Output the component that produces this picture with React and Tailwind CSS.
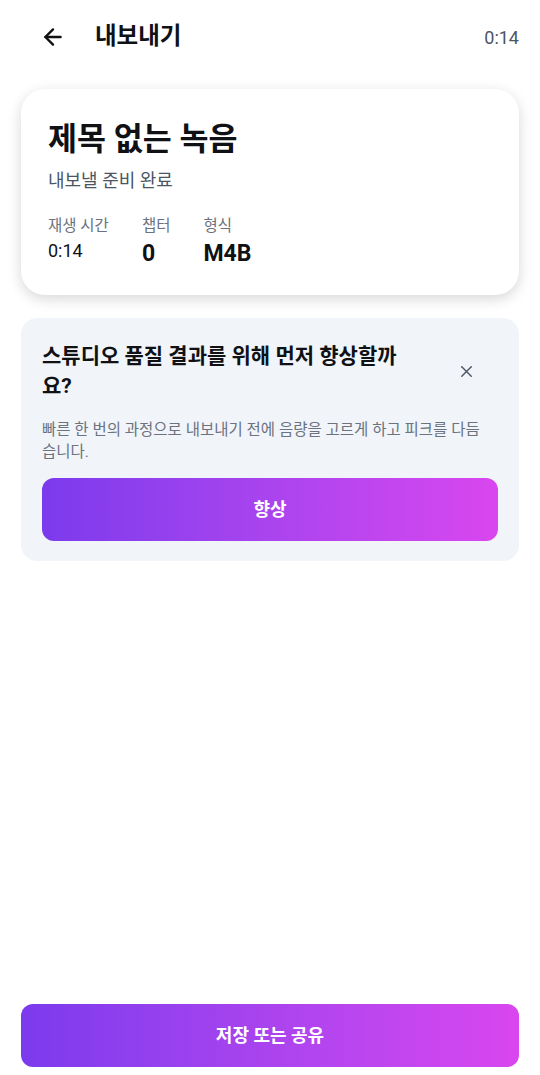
import { ArrowLeft, X } from 'lucide-react';

const FONT = { fontFamily: "Roboto, 'Noto Sans CJK KR', sans-serif" };

export default function App() {
  const stats = [
    { label: '재생 시간', value: '0:14', cls: 'text-[18px] font-normal leading-[22px]' },
    { label: '챕터',     value: '0',    cls: 'text-[23px] font-bold leading-[28px]' },
    { label: '형식',     value: 'M4B',  cls: 'text-[23px] font-bold leading-[28px]' },
  ];

  return (
    <div style={FONT} className="w-[540px] h-[1075px] bg-white flex flex-col text-[#0f1115]">
      {/* Header */}
      <div className="h-[74px] flex items-center pl-[40px] pr-[21px]">
        <ArrowLeft size={26} strokeWidth={2.2} className="text-[#111]" />
        <h1 className="ml-[29px] text-[23.5px] font-bold">내보내기</h1>
        <span className="ml-auto text-[18px] text-[#4b5563]">0:14</span>
      </div>

      {/* Recording card */}
      <div className="mx-[21px] mt-[15px] rounded-[24px] bg-white shadow-[0_4px_14px_rgba(0,0,0,0.16)] px-[27px] pt-[31px] pb-[27px]">
        <h2 className="text-[31.5px] font-bold leading-[40px]">제목 없는 녹음</h2>
        <p className="mt-[9px] text-[18px] leading-[24px] text-[#4b5563]">내보낼 준비 완료</p>
        <div className="mt-[23px] flex gap-[33px]">
          {stats.map(s => (
            <div key={s.label} className="flex flex-col">
              <span className="text-[15.5px] leading-[20px] text-[#6b7280]">{s.label}</span>
              <span className={`mt-[4px] ${s.cls}`}>{s.value}</span>
            </div>
          ))}
        </div>
      </div>

      {/* Enhance suggestion */}
      <div className="mx-[21px] mt-[23px] rounded-[16px] bg-[#f1f5f9] px-[21px] pt-[23px] pb-[20px]">
        <div className="flex items-center">
          <h3 className="flex-1 text-[21px] font-bold leading-[30px]">
            스튜디오 품질 결과를 위해 먼저 향상할까요?
          </h3>
          <button className="ml-[24px] mr-[12px] w-[40px] h-[40px] flex items-center justify-center text-[#4b5563]">
            <X size={19} strokeWidth={1.8} />
          </button>
        </div>
        <p className="mt-[18px] pr-[12px] text-[15.5px] leading-[22px] text-[#6b7280]">
          빠른 한 번의 과정으로 내보내기 전에 음량을 고르게 하고 피크를 다듬습니다.
        </p>
        <button className="mt-[15px] w-full h-[63px] rounded-[12px] bg-gradient-to-r from-[#7c3aed] to-[#d946ef] text-white text-[18px] font-bold">
          향상
        </button>
      </div>

      <div className="flex-1" />

      {/* Bottom action */}
      <button className="mx-[21px] mb-[8px] h-[63px] rounded-[12px] bg-gradient-to-r from-[#7c3aed] to-[#d946ef] text-white text-[18px] font-bold">
        저장 또는 공유
      </button>
    </div>
  );
}
